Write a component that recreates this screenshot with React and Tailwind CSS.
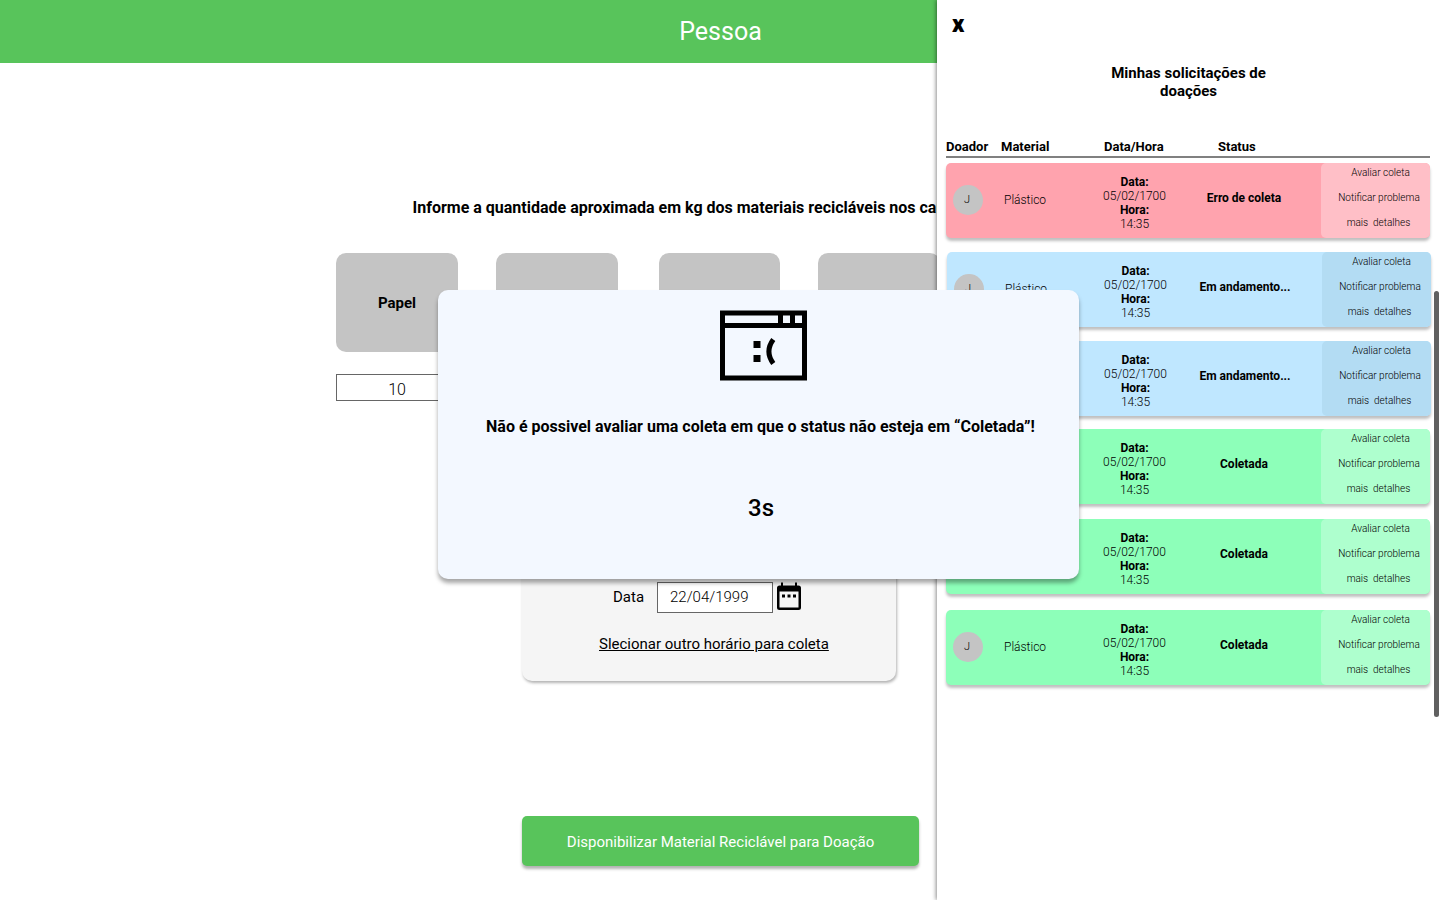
const requests = [
  { status: "Erro de coleta", tone: "red", gap: "mt-[5px]" },
  { status: "Em andamento...", tone: "blue", gap: "mt-[14px] ml-px" },
  { status: "Em andamento...", tone: "blue", gap: "mt-[14px] ml-px" },
  { status: "Coletada", tone: "green", gap: "mt-[13px]" },
  { status: "Coletada", tone: "green", gap: "mt-[15px]" },
  { status: "Coletada", tone: "green", gap: "mt-[16px]" },
];

const tones = {
  red: { row: "bg-[#ffa3ae]", actions: "bg-[#ffbfc7]" },
  blue: { row: "bg-[#bfe7ff]", actions: "bg-[#b3dcf3]" },
  green: { row: "bg-[#8dffb9]", actions: "bg-[#aeffce]" },
};

function RequestRow({ status, tone, gap }) {
  return (
    <li
      className={`flex h-[75px] w-[484px] shrink-0 rounded-[5px] shadow-[0_3px_3px_rgba(0,0,0,0.25)] ${tones[tone].row} ${gap}`}
    >
      <div className="flex w-[58px] items-center pb-[2px] pl-[7px]">
        <span className="flex size-[30px] items-center justify-center rounded-full bg-[#c4c4c4] pt-px pr-[2px] text-[11px] font-light">
          J
        </span>
      </div>
      <div className="flex w-[100px] items-center pb-[2px] text-[12px] font-light">Plástico</div>
      <div className="w-[61px] pt-3 text-center text-[12px] leading-[14px] whitespace-nowrap">
        <p className="font-bold">Data:</p>
        <p className="-mx-2 font-light">05/02/1700</p>
        <p className="font-bold">Hora:</p>
        <p className="font-light">14:35</p>
      </div>
      <div className="flex w-[156px] items-center justify-center pb-[5px] pl-[2px] text-[12px] font-bold">
        {status}
      </div>
      <div
        className={`flex w-[109px] flex-col gap-[13px] rounded-[5px] pt-1 pl-[7px] text-center text-[10px] leading-3 font-light whitespace-pre ${tones[tone].actions}`}
      >
        <button className="pl-[3px]">Avaliar coleta</button>
        <button>Notificar problema</button>
        <button className="pr-px">mais  detalhes</button>
      </div>
    </li>
  );
}

function Drawer() {
  return (
    <aside className="absolute top-0 right-0 flex h-[900px] w-[503px] flex-col bg-white pl-[9px] shadow-[-1px_0_4px_rgba(0,0,0,0.45)]">
      <button className="ml-[6px] self-start pt-[10px] text-left text-[24px] leading-7 font-black">
        x
      </button>
      <h2 className="mt-[26px] w-[485px] text-center text-[15px] leading-[18px] font-bold">
        Minhas solicitações de
        <br />
        doações
      </h2>
      <div className="mt-[39px] flex h-[19px] w-[484px] border-b-2 border-[#808080] text-[13px] leading-[15px] font-bold">
        <span className="w-[55px]">Doador</span>
        <span className="w-[103px]">Material</span>
        <span className="w-[114px]">Data/Hora</span>
        <span>Status</span>
      </div>
      <ul className="flex flex-col">
        {requests.map((request, i) => (
          <RequestRow key={i} {...request} />
        ))}
      </ul>
      <div className="absolute top-[291px] right-[1px] h-[426px] w-[5px] rounded-full bg-[#606060]" />
    </aside>
  );
}

function SadWindowIcon() {
  return (
    <svg width="87" height="71" viewBox="0 0 87 71" className="block">
      <path
        fillRule="evenodd"
        d="M0 .5H87V70.5H0ZM5 5.5V13H58V5.5ZM63 5.5V13H70V5.5ZM75 5.5V13H82V5.5ZM5 18V65.5H82V18Z"
      />
      <path d="M33.5 31H40.5V38H33.5ZM33.5 45H40.5V52H33.5Z" />
      <path d="M53.3 29.5Q44.5 41.5 53.3 53.5" fill="none" stroke="#000" strokeWidth="5" />
    </svg>
  );
}

function ErrorDialog() {
  return (
    <div
      role="dialog"
      className="absolute top-[290px] left-[438px] flex h-[289px] w-[641px] flex-col items-center rounded-[10px] bg-[#f3f8ff] pt-5 shadow-[0_4px_4px_rgba(0,0,0,0.35)]"
    >
      <div className="ml-[10px]">
        <SadWindowIcon />
      </div>
      <p className="mt-[36px] ml-1 text-[16px] leading-5 font-bold whitespace-nowrap">
        Não é possivel avaliar uma coleta em que o status não esteja em “Coletada”!
      </p>
      <p className="mt-[56px] ml-[5px] text-[24px] leading-[30px] font-medium">3s</p>
    </div>
  );
}

function CalendarIcon() {
  return (
    <svg width="24" height="28" viewBox="0 0 24 28" className="ml-1 block">
      <path
        fillRule="evenodd"
        d="M4 .5H6V3.500H18V.5H20V3.500H21.500Q24 3.500 24 6V25.500Q24 28 21.500 28H2.500Q0 28 0 25.500V6Q0 3.500 2.500 3.500H4ZM2.500 9.500V25.500H21.500V9.500Z"
      />
      <path d="M5 12.500H8V15.500H5ZM10.500 12.500H13.500V15.500H10.500ZM16 12.500H19V15.500H16Z" />
    </svg>
  );
}

export default function App() {
  return (
    <div className="relative h-[900px] w-[1440px] overflow-hidden bg-white font-[Roboto,sans-serif] text-black">
      <header className="flex h-[63px] items-center justify-center bg-[#58c45b] pl-px text-[25px] text-white">
        Pessoa
      </header>
      <main className="flex flex-col">
        <h1 className="mt-[135px] ml-[412.5px] text-[16px] leading-5 font-bold whitespace-nowrap">
          Informe a quantidade aproximada em kg dos materiais recicláveis nos campos
        </h1>
        <div className="mt-[35px] ml-[336px] flex">
          <div className="mr-[38px] flex h-[99px] w-[122px] items-center justify-center rounded-[10px] bg-[#c4c4c4] pt-[2px] text-[15px] font-bold">
            Papel
          </div>
          <div className="mr-[41px] h-[99px] w-[122px] rounded-[10px] bg-[#c4c4c4]" />
          <div className="mr-[38px] h-[99px] w-[121px] rounded-[10px] bg-[#c4c4c4]" />
          <div className="h-[99px] w-[122px] rounded-[10px] bg-[#c4c4c4]" />
        </div>
        <div className="mt-[22px] ml-[336px] flex h-[27px] w-[122px] items-center justify-center border border-[#666] pt-[5px] text-[16px] font-light">
          10
        </div>
        <section className="mt-[99px] ml-[522px] flex h-[181px] w-[374px] flex-col rounded-[10px] bg-[#f5f5f5] pt-[82px] shadow-[1px_2px_3px_rgba(0,0,0,0.3)]">
          <div className="flex pl-[91px]">
            <span className="w-[44px] pt-[5px] text-[15px] leading-5">Data</span>
            <div className="flex h-[31px] w-[116px] items-center border border-[#666] bg-white pb-px pl-3 text-[15px] font-light">
              22/04/1999
            </div>
            <CalendarIcon />
          </div>
          <a className="mt-[21px] ml-[77px] self-start text-[15px] leading-5 whitespace-nowrap underline">
            Slecionar outro horário para coleta
          </a>
        </section>
        <button className="mt-[135px] ml-[522px] h-[50px] w-[397px] rounded-[5px] bg-[#58c45b] pt-[2px] text-[15px] text-white shadow-[0_3px_3px_rgba(0,0,0,0.3)]">
          Disponibilizar Material Reciclável para Doação
        </button>
      </main>
      <Drawer />
      <ErrorDialog />
    </div>
  );
}
